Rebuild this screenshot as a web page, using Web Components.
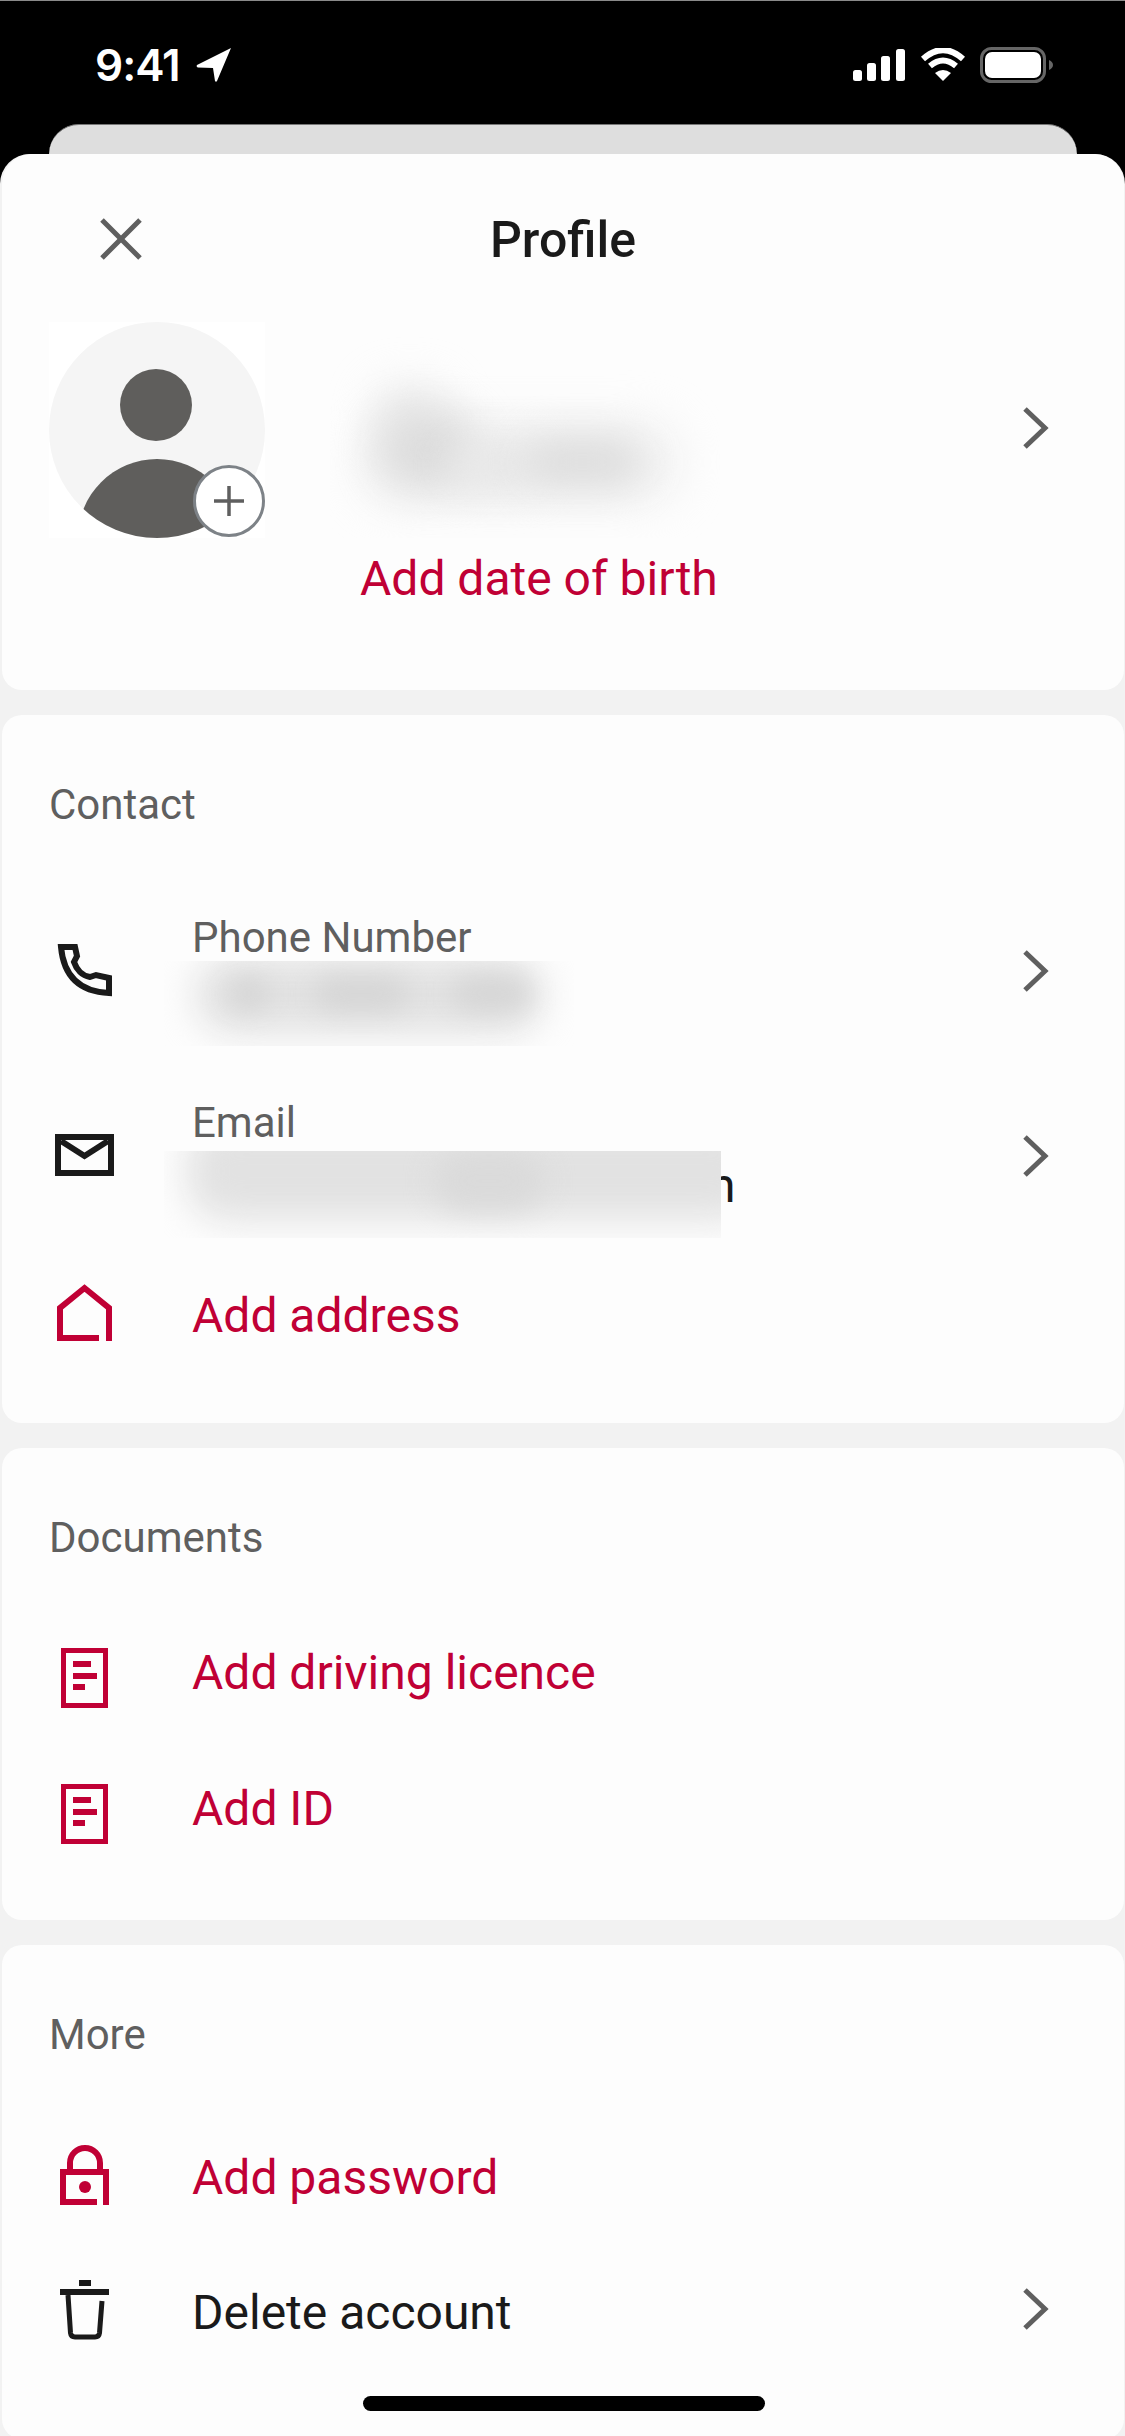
<!DOCTYPE html>
<html lang="en">
<head>
<meta charset="utf-8">
<title>Profile</title>
<style>
  html, body { margin: 0; height: 2436px; overflow: hidden; background: #000; }
  body { font-family: Roboto, "Liberation Sans", sans-serif; }
</style>
</head>
<body>
<profile-screen>
  <profile-card-head></profile-card-head>

  <profile-section label="Contact" gap="50" pad-bottom="41">
    <profile-row label="Phone Number" chevron tall>
      <svg slot="icon" viewBox="0 0 70 70" width="70" height="70"><path d="M11 9H25L27 18L24 24Q26 30 30 34T40 39L46 37L59 40V55Q15 53 11 9Z" fill="none" stroke="#1a1a1a" stroke-width="6"/></svg>
      <redacted-patch style="--left:-28px;--top:-2px;--w:410px;--h:85px"
        blobs="30,-5,350,78,#e2e2e2,18;65,15,40,35,#d6d6d6,12;151,15,92,35,#d6d6d6,12;289,15,76,35,#d6d6d6,12"></redacted-patch>
    </profile-row>
    <profile-row label="Email" chevron tall>
      <svg slot="icon" viewBox="0 0 70 70" width="70" height="70"><path d="M8 14H61V50H8Z M11 18L34.500 33L58 18" fill="none" stroke="#1a1a1a" stroke-width="6"/></svg>
      <span class="tail">n</span>
      <redacted-patch style="--left:-28px;--top:3px;--w:557px;--h:87px"
        blobs="22,-30,580,100,#e2e2e2,18;270,0,110,60,#dadada,14"></redacted-patch>
    </profile-row>
    <profile-row action text="Add address" height="132">
      <svg slot="icon" viewBox="0 0 70 70" width="70" height="70"><path d="M49 57H10V27L34.500 7L59 27V60" fill="none" stroke="#c00035" stroke-width="6"/></svg>
    </profile-row>
  </profile-section>

  <profile-section label="Documents" gap="47" pad-bottom="38">
    <profile-row action text="Add driving licence" raise="10">
      <svg slot="icon" viewBox="0 0 70 70" width="70" height="70"><path d="M13.500 7.500H55.500V62.500H13.500Z" fill="none" stroke="#c00035" stroke-width="5"/><path d="M23 18H41V24H23ZM23 30H47V36H23ZM23 41H35V47H23Z" fill="#c00035"/></svg>
    </profile-row>
    <profile-row action text="Add ID" raise="10">
      <svg slot="icon" viewBox="0 0 70 70" width="70" height="70"><path d="M13.500 7.500H55.500V62.500H13.500Z" fill="none" stroke="#c00035" stroke-width="5"/><path d="M23 18H41V24H23ZM23 30H47V36H23ZM23 41H35V47H23Z" fill="#c00035"/></svg>
    </profile-row>
  </profile-section>

  <profile-section label="More" gap="47" pad-bottom="60">
    <profile-row action text="Add password" raise="-6">
      <svg slot="icon" viewBox="0 0 70 70" width="70" height="70"><path d="M47 62H13V32H56V65M20 30V23A15 15 0 0 1 50 23V30" fill="none" stroke="#c00035" stroke-width="6"/><circle cx="35" cy="47" r="6" fill="#c00035"/></svg>
    </profile-row>
    <profile-row text="Delete account" chevron raise="-4">
      <svg slot="icon" viewBox="0 0 70 70" width="70" height="70"><path d="M29 4H41V10H29ZM10 13H59V19H10Z" fill="#1a1a1a"/><path d="M18 19L20.500 57Q21 61 25 61H45Q49 61 49.500 57L52 25" fill="none" stroke="#1a1a1a" stroke-width="5"/></svg>
    </profile-row>
  </profile-section>
</profile-screen>

<script>
const CHEVRON = '<svg width="30" height="46" viewBox="0 0 30 46"><path d="M5 4L25 23L5 42" fill="none" stroke="#5f5f5f" stroke-width="5"/></svg>';

/**
 * Whole screen: status bar, sheet and home indicator.
 */
class ProfileScreen extends HTMLElement {
  constructor() {
    super();
    this.attachShadow({ mode: 'open' }).innerHTML = `
      <style>
        :host { display: block; position: relative; height: 2436px; overflow: hidden; border-top: 1px solid #8a8a8a; box-sizing: border-box; }
        .status { display: flex; justify-content: space-between; align-items: center; height: 123px; box-sizing: border-box; padding: 4px 71px 0 95px; color: #fff; }
        .left, .right { display: flex; align-items: center; }
        .time { font: 600 44px/50px Inter, "Liberation Sans", sans-serif; letter-spacing: -1px; }
        .left svg { margin-left: 16px; }
        .peek { height: 30px; margin: 0 48px 0 49px; background: #dedede; border-radius: 30px 30px 0 0; border-top: 1px solid #777; box-sizing: border-box; }
        .sheet { display: flex; flex-direction: column; gap: 25px; padding: 0 1px 0 2px; background: #f2f2f2; border-radius: 30px 30px 0 0; overflow: hidden; height: 2282px; }
        .home { position: absolute; left: 363px; top: 2395px; width: 402px; height: 15px; border-radius: 8px; background: #000; }
      </style>
      <div class="status">
        <div class="left">
          <span class="time">9:41</span>
          <svg width="36" height="34" viewBox="0 0 36 34"><path d="M35 0L1 17Q0 19 2 19.500L17 20L19 33Q20 34.500 21 33Z" fill="#fff"/></svg>
        </div>
        <div class="right">
          <svg width="52" height="32" viewBox="0 0 52 32" fill="#fff">
            <rect x="0" y="21" width="9" height="11" rx="2.500"/><rect x="14" y="14" width="9" height="18" rx="2.500"/><rect x="28" y="7" width="9" height="25" rx="2.500"/><rect x="43" y="0" width="9" height="32" rx="2.500"/>
          </svg>
          <svg width="46" height="34" viewBox="0 0 46 34" style="margin-left:15px">
            <path d="M3 11Q23 -7 43 11M10 18Q23 7 36 18" fill="none" stroke="#fff" stroke-width="6"/><path d="M23 33L15 25Q23 19 31 25Z" fill="#fff"/>
          </svg>
          <svg width="74" height="36" viewBox="0 0 74 36" style="margin-left:14px">
            <rect x="1.500" y="1.500" width="63" height="33" rx="10" fill="none" stroke="#666" stroke-width="3"/>
            <rect x="5" y="5" width="56" height="26" rx="7" fill="#fff"/>
            <path d="M69 13Q73 15 73 18T69 23Z" fill="#666"/>
          </svg>
        </div>
      </div>
      <div class="peek"></div>
      <div class="sheet"><slot></slot></div>
      <div class="home"></div>
    `;
  }
}

/**
 * Top card: title, avatar, blurred name and date of birth link.
 */
class ProfileCardHead extends HTMLElement {
  constructor() {
    super();
    this.attachShadow({ mode: 'open' }).innerHTML = `
      <style>
        :host { display: block; height: 536px; box-sizing: border-box; padding: 50px 47px 0; background: #fdfdfd; border-radius: 30px 30px 20px 20px; flex: none; }
        .bar { display: grid; grid-template-columns: 1fr auto 1fr; align-items: center; height: 68px; }
        .close { display: block; margin-left: 50px; }
        h1 { margin: 2px 0 0; font: 500 50px/68px Roboto, sans-serif; color: #1a1a1a; }
        .who { display: flex; align-items: center; margin-top: 50px; height: 216px; position: relative; }
        .avatar { position: relative; width: 216px; height: 216px; flex: none; }
        .plus { position: absolute; left: 144px; top: 143px; width: 72px; height: 72px; }
        .name { position: relative; flex: 1; height: 100%; }
        .chevron { display: block; margin-right: 27px; }
        .dob { margin: 13px 0 0 311px; font: 400 48px/56px Roboto, sans-serif; color: #c00035; }
      </style>
      <div class="bar">
        <svg class="close" width="44" height="44" viewBox="0 0 44 44"><path d="M3 3L41 41M41 3L3 41" stroke="#5f5f5f" stroke-width="5"/></svg>
        <h1>Profile</h1>
        <span></span>
      </div>
      <div class="who">
        <div class="avatar">
          <svg width="216" height="216" viewBox="0 0 216 216">
            <defs><clipPath id="disc"><circle cx="108" cy="108" r="108"/></clipPath></defs>
            <rect width="216" height="216" fill="#fff"/>
            <circle cx="108" cy="108" r="108" fill="#f5f5f5"/>
            <circle cx="107" cy="83" r="36" fill="#5f5e5c"/>
            <circle cx="108" cy="216" r="79" fill="#5f5e5c" clip-path="url(#disc)"/>
          </svg>
          <svg class="plus" viewBox="0 0 72 72"><circle cx="36" cy="36" r="34.500" fill="#fff" stroke="#7d8287" stroke-width="3"/><path d="M36 21V51M21 36H51" stroke="#5f5f5f" stroke-width="3.500"/></svg>
        </div>
        <div class="name">
          <redacted-patch style="--left:65px;--top:0px;--w:390px;--h:216px"
            blobs="30,100,320,80,#f0f0f0,22;45,65,70,60,#eaeaea,22;50,90,95,75,#dcdcdc,20;120,120,90,50,#e8e8e8,18;195,115,115,50,#dedede,18"></redacted-patch>
        </div>
        <div class="chevron">${CHEVRON}</div>
      </div>
      <div class="dob">Add date of birth</div>
    `;
  }
}

/**
 * White card with a grey heading and rows below it.
 */
class ProfileSection extends HTMLElement {
  constructor() {
    super();
    const label = this.getAttribute('label');
    const gap = this.getAttribute('gap') + 'px';
    const bottom = this.getAttribute('pad-bottom') + 'px';
    this.attachShadow({ mode: 'open' }).innerHTML = `
      <style>
        :host { display: block; flex: none; box-sizing: border-box; padding: 65px 47px ${bottom}; background: #fdfdfd; border-radius: 20px; }
        h2 { margin: 0 0 ${gap}; font: 400 42px/50px Roboto, sans-serif; color: #5f5f5f; }
      </style>
      <h2>${label}</h2>
      <slot></slot>
    `;
  }
}

/**
 * One row: icon, then either a label over a blurred value or a single text.
 */
class ProfileRow extends HTMLElement {
  constructor() {
    super();
    const isTall = this.hasAttribute('tall');
    const isAction = this.hasAttribute('action');
    const height = this.getAttribute('height') || (isTall ? 185 : 136);
    const raise = Number(this.getAttribute('raise') || 0);
    const text = this.getAttribute('text') || '';
    const label = this.getAttribute('label') || '';
    const body = isTall
      ? `<div class="label">${label}</div><div class="value"><slot></slot></div>`
      : `<div class="text ${isAction ? 'action' : ''}">${text}</div>`;
    this.attachShadow({ mode: 'open' }).innerHTML = `
      <style>
        :host { display: flex; align-items: center; height: ${height}px; }
        .icon { width: 70px; height: 70px; margin-left: 1px; flex: none; }
        .body { position: relative; flex: 1; margin: ${raise < 0 ? -raise : 0}px 0 ${isTall ? 14 : Math.max(raise, 0)}px 72px; }
        .label { font: 400 42px/50px Roboto, sans-serif; color: #5f5f5f; }
        .value { position: relative; height: 56px; font: 400 48px/56px Roboto, sans-serif; color: #1a1a1a; }
        .text { font: 400 48px/56px Roboto, sans-serif; color: #1a1a1a; }
        .action { color: #c00035; }
        .chevron { margin-right: 27px; flex: none; display: ${this.hasAttribute('chevron') ? 'block' : 'none'}; }
        ::slotted(.tail) { position: absolute; left: 517px; top: 10px; }
      </style>
      <div class="icon"><slot name="icon"></slot></div>
      <div class="body">${body}</div>
      <div class="chevron">${CHEVRON}</div>
    `;
  }
}

/**
 * Blurred smear that hides private text; its blobs are clipped to the box.
 * blobs attribute: x,y,w,h,colour,blur separated by semicolons.
 */
class RedactedPatch extends HTMLElement {
  constructor() {
    super();
    const blobs = (this.getAttribute('blobs') || '').split(';').map((item) => {
      const [x, y, w, h, colour, blur] = item.split(',');
      return `<i style="left:${x}px;top:${y}px;width:${w}px;height:${h}px;background:${colour};filter:blur(${blur}px)"></i>`;
    }).join('');
    this.attachShadow({ mode: 'open' }).innerHTML = `
      <style>
        :host { display: block; position: absolute; left: var(--left); top: var(--top); width: var(--w); height: var(--h); overflow: hidden; background: #fdfdfd; }
        i { position: absolute; border-radius: 40px; }
      </style>
      ${blobs}
    `;
  }
}

customElements.define('profile-screen', ProfileScreen);
customElements.define('profile-card-head', ProfileCardHead);
customElements.define('profile-section', ProfileSection);
customElements.define('profile-row', ProfileRow);
customElements.define('redacted-patch', RedactedPatch);
</script>
</body>
</html>
